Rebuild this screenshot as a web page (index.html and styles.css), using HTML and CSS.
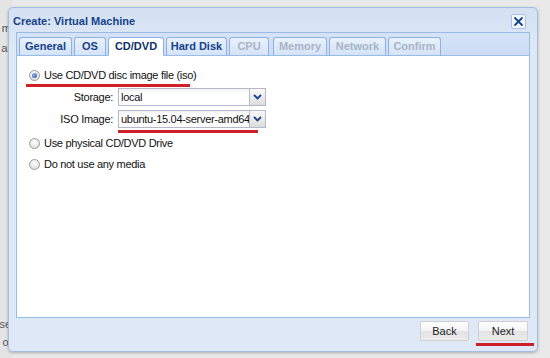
FILE: index.html
```html
<!DOCTYPE html>
<html>
<head>
<meta charset="utf-8">
<link rel="stylesheet" href="styles.css">
</head>
<body>
<div class="desk">
  <div class="bgapp">
    <span class="bg1">m</span>
    <span class="bg2">ar</span>
    <span class="bg3">se</span>
    <span class="bg4">ol</span>
  </div>
  <div class="win">
    <div class="titlebar">
      <span class="title">Create: Virtual Machine</span>
      <span class="close"><svg width="11" height="11" viewBox="0 0 11 11"><path d="M2 2 L9 9 M9 2 L2 9" stroke="#15428b" stroke-width="1.8" stroke-linecap="round"/></svg></span>
    </div>
    <div class="tabpanel">
      <div class="tabstrip">
        <span class="tab t-gen">General</span>
        <span class="tab t-os">OS</span>
        <span class="tab t-cd active">CD/DVD</span>
        <span class="tab t-hd">Hard Disk</span>
        <span class="tab t-cpu dis">CPU</span>
        <span class="tab t-mem dis">Memory</span>
        <span class="tab t-net dis">Network</span>
        <span class="tab t-conf dis">Confirm</span>
      </div>
      <div class="tabbody">
        <div class="radiorow first">
          <span class="radio on"></span><span class="lbl">Use CD/DVD disc image file (iso)</span>
          <span class="redline r1"></span>
        </div>
        <div class="field f1">
          <span class="flabel">Storage:</span>
          <span class="combo"><span class="cinput">local</span><span class="trig"><svg width="9" height="6" viewBox="0 0 9 6"><path d="M1 1 L4.5 4.5 L8 1" stroke="#15428b" stroke-width="1.8" fill="none"/></svg></span></span>
        </div>
        <div class="field">
          <span class="flabel">ISO Image:</span>
          <span class="combo"><span class="cinput">ubuntu-15.04-server-amd64</span><span class="trig"><svg width="9" height="6" viewBox="0 0 9 6"><path d="M1 1 L4.5 4.5 L8 1" stroke="#15428b" stroke-width="1.8" fill="none"/></svg></span></span>
          <span class="redline r2"></span>
        </div>
        <div class="radiorow r-phys">
          <span class="radio"></span><span class="lbl">Use physical CD/DVD Drive</span>
        </div>
        <div class="radiorow r-none">
          <span class="radio"></span><span class="lbl">Do not use any media</span>
        </div>
      </div>
    </div>
    <div class="footer">
      <span class="btn back">Back</span>
      <span class="btn next">Next<span class="redline r3"></span></span>
    </div>
  </div>
</div>
</body>
</html>
```
FILE: styles.css
```css
html, body {
  margin: 0;
  padding: 0;
}
body {
  width: 550px;
  height: 358px;
  overflow: hidden;
  background: #e9e9e9;
  font-family: "Liberation Sans", Arial, sans-serif;
}
.desk {
  position: relative;
  width: 550px;
  height: 358px;
  padding-top: 7px;
  box-sizing: border-box;
}
.bgapp {
  position: absolute;
  left: 0;
  top: 0;
  width: 12px;
  height: 358px;
  background: #e4e4e4;
  font-size: 11px;
  color: #555;
  overflow: hidden;
}
.bgapp span {
  position: absolute;
  right: 1px;
}
.bg1 { top: 22px; }
.bg2 { top: 42px; }
.bg3 { top: 318px; }
.bg4 { top: 336px; }
.win {
  position: relative;
  margin-left: 8px;
  width: 530px;
  height: 345px;
  box-sizing: border-box;
  border: 1px solid #a3bde3;
  border-radius: 5px;
  background: linear-gradient(#d3e1f3, #dfe8f5 40px, #dfe8f6);
  box-shadow: 0 1px 3px rgba(0,0,0,0.25);
  display: flex;
  flex-direction: column;
}
.titlebar {
  height: 24px;
  display: flex;
  align-items: center;
  justify-content: space-between;
  padding: 0 11px 0 4px;
}
.title {
  font-weight: bold;
  font-size: 11px;
  color: #15428b;
  padding-top: 1px;
}
.close {
  width: 13px;
  height: 13px;
  border: 1px solid #a9c1e3;
  border-radius: 2px;
  background: #f3f7fc;
  display: flex;
  align-items: center;
  justify-content: center;
  margin-top: 3px;
}
.tabpanel {
  margin: 0 7px;
  border: 1px solid #99bbe8;
  display: flex;
  flex-direction: column;
}
.tabstrip {
  height: 22px;
  background: linear-gradient(#d5e3f6, #cbdcf3);
  display: flex;
  align-items: flex-end;
  gap: 2px;
  padding-left: 2px;
  border-bottom: 1px solid #99bbe8;
}
.tab {
  height: 17px;
  line-height: 17px;
  margin-bottom: -1px;
  box-sizing: content-box;
  border: 1px solid #8db2e3;
  border-bottom: 1px solid #99bbe8;
  border-radius: 3px 3px 0 0;
  background: linear-gradient(#e9f1fc, #d4e3f7);
  color: #15428b;
  font-weight: bold;
  font-size: 11px;
  text-align: center;
  white-space: nowrap;
}
.t-gen { width: 51px; }
.t-os { width: 30px; }
.t-cd { width: 54px; }
.t-hd { width: 59px; }
.t-cpu { width: 38px; }
.t-mem { width: 52px; margin-left: 2px; }
.t-net { width: 55px; }
.t-conf { width: 51px; }
.tab.active {
  background: #fff;
  border-bottom-color: #fff;
  color: #0f3170;
}
.tab.dis {
  color: #a9b4c5;
}
.tabbody {
  background: #fff;
  height: 261px;
  padding: 9px 0 0 12px;
  box-sizing: border-box;
  display: flex;
  flex-direction: column;
}
.radiorow {
  position: relative;
  display: flex;
  align-items: center;
  height: 20px;
  font-size: 11px;
  letter-spacing: -0.3px;
  color: #111;
}
.r-phys { margin-top: 3px; }
.r-none { margin-top: 1px; }
.radio {
  width: 11px;
  height: 11px;
  border-radius: 50%;
  border: 1px solid #9a9a9a;
  background: radial-gradient(circle at 50% 35%, #fff, #d8d8d8);
  box-sizing: border-box;
  margin-right: 4px;
  position: relative;
}
.radio.on::after {
  content: "";
  position: absolute;
  left: 2px;
  top: 2px;
  width: 5px;
  height: 5px;
  border-radius: 50%;
  background: radial-gradient(circle at 40% 35%, #8fb6e8, #1d4f9a);
}
.redline {
  position: absolute;
  height: 3px;
  background: #cf2027;
}
.r1 { left: -3px; width: 164px; bottom: -2px; }
.r2 { left: 89px; width: 140px; bottom: -3px; }
.field {
  position: relative;
  display: flex;
  align-items: center;
  height: 22px;
  font-size: 11px;
  letter-spacing: -0.3px;
  color: #111;
}
.f1 { margin-top: 1px; }
.flabel {
  width: 84px;
  text-align: right;
  padding-right: 5px;
}
.combo {
  display: flex;
  height: 18px;
  width: 148px;
}
.cinput {
  flex: 1;
  border: 1px solid #b5b8c8;
  border-right: none;
  background: linear-gradient(#f2f2f2, #fff 4px);
  line-height: 16px;
  padding-left: 2px;
  white-space: nowrap;
  overflow: hidden;
}
.trig {
  width: 15px;
  border: 1px solid #b5b8c8;
  background: linear-gradient(#fafafa, #dcdcdc);
  display: flex;
  align-items: center;
  justify-content: center;
}
.footer {
  flex: 1;
  display: flex;
  justify-content: flex-end;
  align-items: flex-start;
  gap: 9px;
  padding: 3px 9px 0 0;
}
.btn {
  position: relative;
  box-sizing: border-box;
  height: 20px;
  line-height: 18px;
  text-align: center;
  font-size: 11px;
  color: #222;
  border: 1px solid #d0d0d0;
  border-radius: 2px;
  background: linear-gradient(#ffffff, #f4f4f4 50%, #e2e2e2 51%, #ececec);
}
.back { width: 49px; }
.next { width: 50px; }
.r3 { left: -3px; width: 58px; bottom: -6px; height: 3px; }
```
